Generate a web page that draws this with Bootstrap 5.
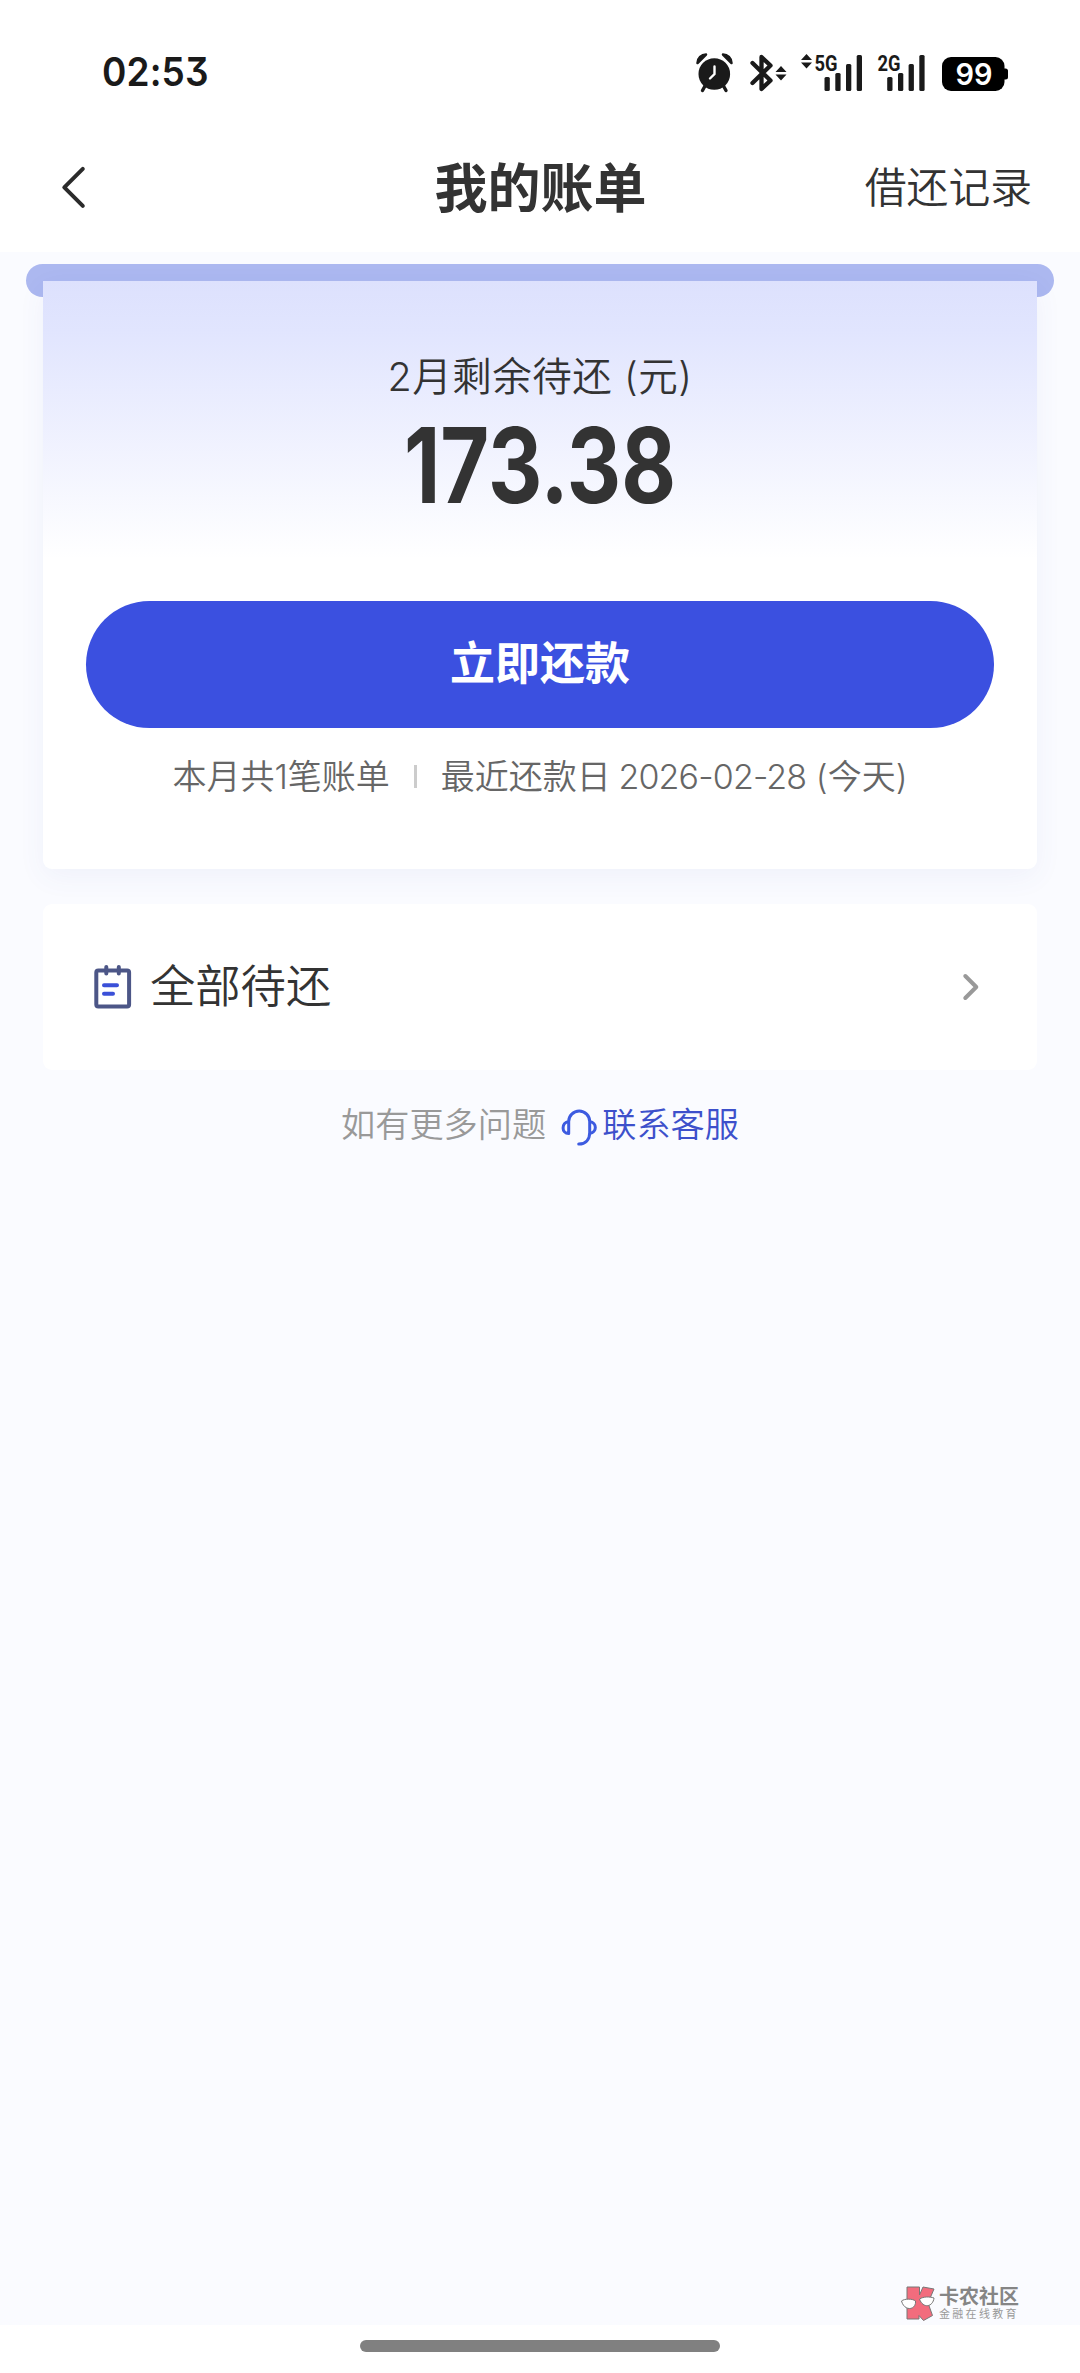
<!DOCTYPE html>
<html lang="zh-CN">
<head>
<meta charset="utf-8">
<meta name="viewport" content="width=device-width, initial-scale=1">
<title>我的账单</title>
<link href="https://cdn.jsdelivr.net/npm/bootstrap@5.3.0/dist/css/bootstrap.min.css" rel="stylesheet">
<style>
body{font-family:Inter,"Noto Sans CJK SC",sans-serif;background:#fff;color:#333;width:1080px;overflow-x:hidden}
.phone{height:2373px}
.statusbar{height:126px;padding:18px 72px 0 102px;color:#1a1a1a}
.clock{font-size:40px;font-weight:600;letter-spacing:.1px;line-height:60px;font-feature-settings:"cv09";transform-origin:left;transform:scaleX(.925)}
.titlebar{height:126px;padding:0 48px 2px 60px}
.titlebar h1{font-size:53px;line-height:70px;font-weight:700;color:#333;padding:2px 11px 0 0}
.side{width:230px}
.back{margin-bottom:2px}
.record{font-size:41.8px;font-weight:350;line-height:60px;white-space:nowrap}
.content-area{background:#fafbff;padding:12px 26px 0}
.slot{height:33px;border-radius:17px;background:#acb8f0}
.bill{margin:-16px 17px 0;height:588px;border-radius:0 0 9px 9px;background:linear-gradient(#dde1fd 0,#e1e5fe 50px,#fff 278px);box-shadow:0 8px 28px rgba(70,90,170,.06);position:relative}
.bill-label{font-size:39.5px;line-height:50px;padding-top:71px;font-weight:350;letter-spacing:.5px}
.amount{font-size:104px;line-height:100px;font-weight:700;transform:scaleX(.81);margin-top:13px}
.pay{height:127px;margin:85.5px 43px 0;background:#3b50e0;color:#fff;font-size:45px;font-weight:700;--bs-btn-hover-bg:#3b50e0}
.info{font-size:34px;line-height:50px;color:#666;font-weight:350;margin-top:24px}
.date{letter-spacing:-.85px;margin-left:-2px}
.vline{width:3px;height:23px;background:#ccc;margin:0 24px 0 24px}
.all{margin:35px 17px 0;height:166px;border-radius:9px;background:#fff;padding:0 56px 0 50px;position:relative}
.all-text{font-size:45.3px;line-height:60px;font-weight:350;margin-left:17px}
.help{font-size:34.2px;line-height:50px;font-weight:350;color:#999;margin-top:30px}
.help a{color:#3d50cb}
.brand{margin:auto 35px 3px auto;color:#858585}
.brand-name{font-size:20px;line-height:20px;font-weight:700}
.brand-sub{font-size:11px;line-height:14px;letter-spacing:2.3px;color:#999}
.homebar{height:48px}
.homebar span{width:360px;height:12px;background:#808080;border-radius:6px;margin-top:15px}
</style>
<script src="https://cdn.jsdelivr.net/npm/bootstrap@5.3.0/dist/js/bootstrap.bundle.min.js"></script>
</head>
<body>
<div class="phone d-flex flex-column">
  <header class="statusbar d-flex justify-content-between align-items-center">
    <div class="clock">02:53</div>
    <div class="d-flex align-items-center">
      <svg width="38" height="43" viewBox="694 50 38 43" fill="#1a1a1a"><circle cx="713.3" cy="73" r="15.8"/><path d="M696.500 62c0-5 4-8.500 8.500-8.500zM730.500 62c0-5-4-8.500-8.500-8.500z" stroke="#1a1a1a" stroke-width="2.500" stroke-linejoin="round"/><path d="M704 85l-2.500 4.500M722.500 85l2.500 4.500" stroke="#1a1a1a" stroke-width="3.400" stroke-linecap="round"/><path d="M713.500 65.500V73l-4.500 4.500" fill="none" stroke="#fff" stroke-width="2.400" stroke-linecap="round"/></svg>
      <svg width="38" height="43" viewBox="748 50 38 43" class="ms-3" fill="#1a1a1a"><path d="M751.500 62l18 17.500-9 8.500v-32l9 8.500-18 17.500" fill="none" stroke="#1a1a1a" stroke-width="4.300" stroke-linecap="round" stroke-linejoin="round"/><path d="M780 65l5.500 6h-11zM780 79.500l5.500-6h-11z"/></svg>
      <svg width="66" height="43" viewBox="798 50 66 43" style="margin-left:12px" fill="#1a1a1a"><path d="M805.500 53l5.500 6h-11zM805.500 67.500l5.500-6h-11z"/><text x="813.500" y="69.500" font-family="Roboto" font-weight="700" font-size="22" textLength="23" lengthAdjust="spacingAndGlyphs">5G</text><rect x="823.500" y="76" width="5.300" height="14" rx="1.500"/><rect x="834.300" y="72" width="5.300" height="18" rx="1.500"/><rect x="845" y="63" width="5.300" height="27" rx="1.500"/><rect x="855.700" y="54" width="5.300" height="36" rx="1.500"/></svg>
      <svg width="52" height="43" viewBox="875 50 52 43" style="margin-left:11px" fill="#1a1a1a"><text x="876.500" y="69.500" font-family="Roboto" font-weight="700" font-size="22" textLength="23" lengthAdjust="spacingAndGlyphs">2G</text><rect x="886.200" y="76" width="5.300" height="14" rx="1.500"/><rect x="897" y="72" width="5.300" height="18" rx="1.500"/><rect x="907.600" y="63" width="5.300" height="27" rx="1.500"/><rect x="918.300" y="54" width="5.300" height="36" rx="1.500"/></svg>
      <svg width="67" height="43" viewBox="940 50 67 43" style="margin-left:13px"><rect x="941" y="56" width="62.500" height="34" rx="9"/><rect x="1000" y="67.500" width="7" height="11" rx="2.500"/><text x="973" y="84.300" font-family="Inter" font-weight="600" font-size="30" fill="#fff" text-anchor="middle" textLength="37" lengthAdjust="spacingAndGlyphs">99</text></svg>
    </div>
  </header>
  <nav class="titlebar d-flex justify-content-between align-items-center">
    <div class="side back"><svg class="d-block" width="28" height="44" viewBox="60 165 28 44"><path d="M82.800 168.800L64.300 187.300l18.500 18.500" fill="none" stroke="#2b2b2b" stroke-width="4" stroke-linecap="round" stroke-linejoin="round"/></svg></div>
    <h1 class="m-0">我的账单</h1>
    <div class="side text-end record">借还记录</div>
  </nav>
  <main class="content-area flex-grow-1 d-flex flex-column">
    <div class="slot flex-shrink-0"></div>
    <section class="bill text-center d-flex flex-column flex-shrink-0">
      <div class="bill-label">2月剩余待还 (元)</div>
      <div class="amount">173.38</div>
      <button class="pay btn rounded-pill border-0 p-0">立即还款</button>
      <div class="info d-flex justify-content-center align-items-center"><span>本月共1笔账单</span><i class="vline"></i><span>最近还款日 <span class="date">2026-02-28</span> (今天)</span></div>
    </section>
    <section class="all d-flex align-items-center flex-shrink-0">
      <svg width="40" height="46" viewBox="93 964 40 46" fill="none" stroke-linecap="round"><rect x="96.300" y="970.500" width="32.800" height="36" rx="2" stroke="#4c5687" stroke-width="4"/><path d="M106.300 967v6.500M118.800 967v6.500" stroke="#4c5687" stroke-width="4"/><path d="M104 985.300h13M104 993.800h9" stroke="#3b50d8" stroke-width="4"/></svg>
      <span class="all-text">全部待还</span>
      <svg class="ms-auto" width="20" height="30" viewBox="961 973 20 30"><path d="M965.300 977l11 11-11 11" fill="none" stroke="#999" stroke-width="4" stroke-linecap="round" stroke-linejoin="round"/></svg>
    </section>
    <div class="help d-flex justify-content-center align-items-center">
      <span>如有更多问题</span>
      <svg style="margin:4px 4px 0 14px" width="38" height="38" viewBox="560 1109 38 38" fill="none" stroke="#3d5be0" stroke-width="3" stroke-linecap="round" stroke-linejoin="round"><path d="M568.700 1134.500v-12a10.500 10.500 0 0 1 21 0v11c0 7-4 11.500-11 11.500M568.700 1122.500c-7.500 1-7.500 12 0 12M589.700 1122.500c7.500 1 7.500 11 0 12"/></svg>
      <a href="#" class="text-decoration-none">联系客服</a>
    </div>
    <div class="brand d-flex align-items-center">
      <svg width="35" height="37" viewBox="900 2285 35 37" stroke="#777" stroke-width="1" stroke-linejoin="round"><path d="M906 2287h12.500v8l3.500-8 11 2-6 14 4.500 12.500-9 5-4.500-5v3.500h-12z" fill="#f26c7d"/><path d="M900.500 2301c3-2.500 11-2.500 14 0 1 9-11 11-14 0zM918.500 2299c4-2.500 10-2.500 14.500-1-1 9-11 11-14.500 1z" fill="#fff"/></svg>
      <div style="margin-left:3px"><div class="brand-name">卡农社区</div><div class="brand-sub">金融在线教育</div></div>
    </div>
  </main>
  <footer class="homebar d-flex justify-content-center"><span></span></footer>
</div>
</body>
</html>
